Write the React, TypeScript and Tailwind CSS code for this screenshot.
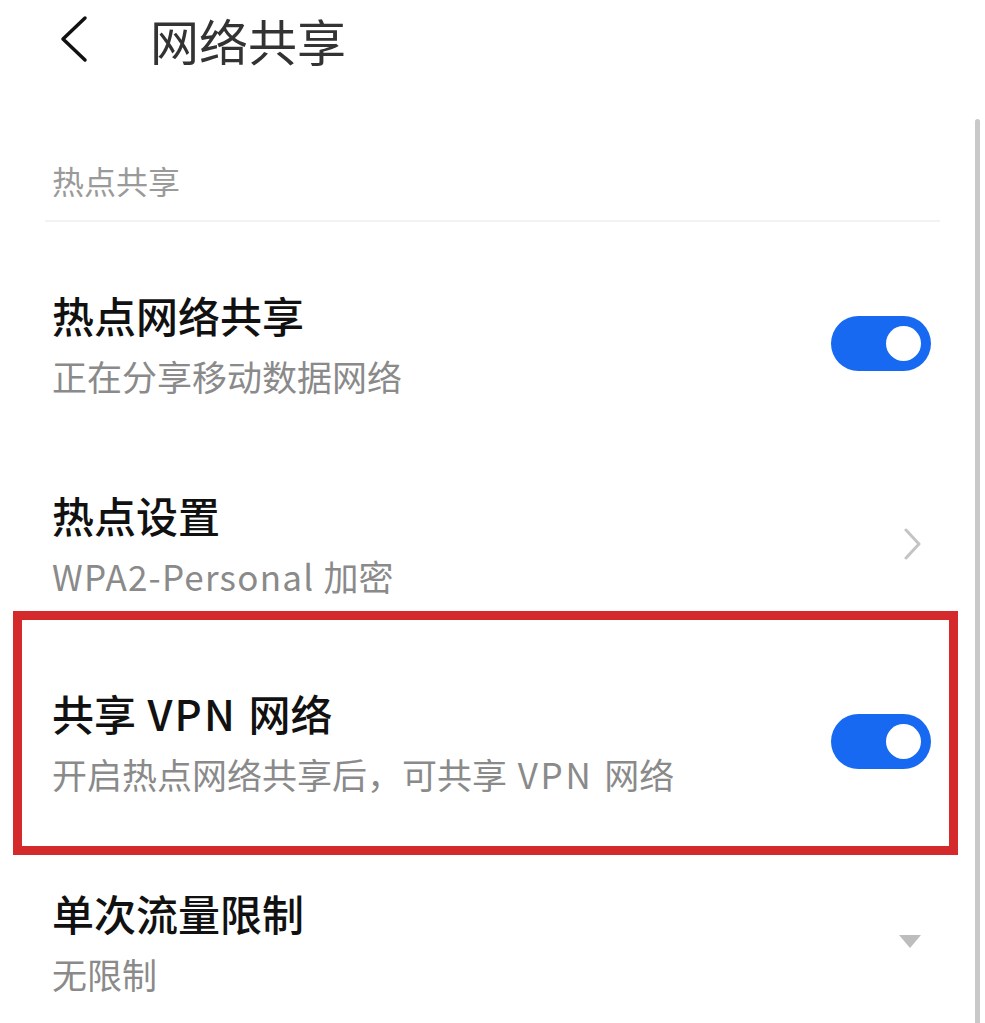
import React from "react";

const font = { fontFamily: '"Noto Sans CJK SC", "Noto Sans", sans-serif' };

function Toggle() {
  return (
    <div className="relative h-[55px] w-[100px] shrink-0 rounded-full bg-[#1769f2]">
      <div className="absolute right-[10px] top-[10px] h-[35px] w-[35px] rounded-full bg-white" />
    </div>
  );
}

function Chevron() {
  return (
    <svg width="20" height="32" viewBox="0 0 20 32" className="shrink-0 mr-[8px]">
      <path d="M3 2 L16 16 L3 30" fill="none" stroke="#c4c4c4" strokeWidth="3" strokeLinecap="round" strokeLinejoin="round" />
    </svg>
  );
}

function Triangle() {
  return (
    <svg width="22" height="14" viewBox="0 0 22 14" className="shrink-0 mr-[10px]">
      <path d="M0 0 L22 0 L11 13 Z" fill="#bdbdbd" />
    </svg>
  );
}

function RowText({ title, sub }: { title: React.ReactNode; sub: React.ReactNode }) {
  return (
    <div className="flex flex-col">
      <div className="text-[42px] leading-[42px] font-medium text-[#111]">{title}</div>
      <div className="mt-[22px] text-[35px] leading-[35px] text-[#8a8a8a]">{sub}</div>
    </div>
  );
}

export default function App() {
  return (
    <div className="relative h-[1023px] w-[985px] overflow-hidden bg-white" style={font}>
      {/* scrollbar */}
      <div className="absolute right-[5px] top-[119px] h-[910px] w-[5px] rounded-full bg-[#c9c9c9]" />

      {/* header */}
      <div className="flex h-[78px] items-center pl-[60px]">
        <svg width="28" height="48" viewBox="0 0 28 48" className="shrink-0">
          <path d="M25 3 L3 24 L25 45" fill="none" stroke="#111" strokeWidth="3.5" strokeLinecap="round" strokeLinejoin="round" />
        </svg>
        <div className="ml-[62px] text-[49px] leading-[49px] text-[#333]">网络共享</div>
      </div>

      {/* section label */}
      <div className="mt-[86px] pl-[52px] text-[32px] leading-[32px] text-[#9a9a9a]">热点共享</div>
      <div className="mx-[45px] mt-[24px] h-[2px] bg-[#f2f2f2]" />

      {/* row 1 */}
      <div className="mt-[72px] flex items-center justify-between pl-[52px] pr-[54px]">
        <RowText title="热点网络共享" sub="正在分享移动数据网络" />
        <Toggle />
      </div>

      {/* row 2 */}
      <div className="mt-[101px] flex items-center justify-between pl-[52px] pr-[54px]">
        <RowText
          title="热点设置"
          sub={
            <>
              <span className="tracking-[0.035em]">WPA2-Personal </span>加密
            </>
          }
        />
        <Chevron />
      </div>

      {/* row 3 highlighted */}
      <div className="ml-[13px] mt-[18px] w-[945px] border-[9px] border-[#d42a2c] pb-[55px] pl-[30px] pr-[18px] pt-[72px]">
        <div className="flex items-center justify-between">
          <RowText
            title={
              <>
                共享<span className="tracking-[0.05em]"> VPN </span>网络
              </>
            }
            sub={
              <>
                开启热点网络共享后，可共享<span className="tracking-[0.08em]"> VPN </span>网络
              </>
            }
          />
          <Toggle />
        </div>
      </div>

      {/* row 4 */}
      <div className="mt-[37px] flex items-center justify-between pl-[52px] pr-[54px]">
        <RowText title="单次流量限制" sub="无限制" />
        <Triangle />
      </div>
    </div>
  );
}
